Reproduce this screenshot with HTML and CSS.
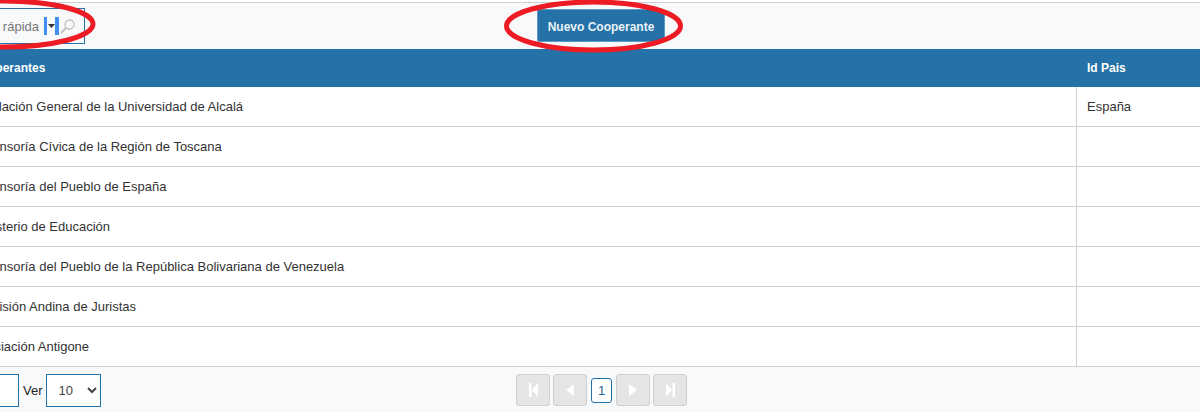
FILE: index.html
```html
<!DOCTYPE html>
<html lang="es">
<head>
<meta charset="utf-8">
<title>Cooperantes</title>
<link rel="stylesheet" href="styles.css">
</head>
<body>
<div class="page">
  <div class="toolbar">
    <div class="toolbar-left">
      <div class="search">
        <span class="search-label">Búsqueda rápida</span>
        <span class="search-menu"><svg width="7" height="4" viewBox="0 0 7 4"><path d="M0 0h7L3.500 4z" fill="#333"/></svg></span>
        <svg class="search-icon" width="15" height="15" viewBox="0 0 15 15"><circle cx="9.500" cy="5.500" r="4.500" fill="none" stroke="#c4c4c4" stroke-width="1.400"/><path d="M6.300 8.700 1 14" stroke="#c4c4c4" stroke-width="2" fill="none"/></svg>
      </div>
    </div>
    <button class="btn-new">Nuevo Cooperante</button>
  </div>
  <table class="grid">
    <thead>
      <tr><th>Cooperantes</th><th class="col-pais">Id Pais</th></tr>
    </thead>
    <tbody>
      <tr><td>Fundación General de la Universidad de Alcalá</td><td class="col-pais">España</td></tr>
      <tr><td>Defensoría Cívica de la Región de Toscana</td><td class="col-pais"></td></tr>
      <tr><td>Defensoría del Pueblo de España</td><td class="col-pais"></td></tr>
      <tr><td>Ministerio de Educación</td><td class="col-pais"></td></tr>
      <tr><td>Defensoría del Pueblo de la República Bolivariana de Venezuela</td><td class="col-pais"></td></tr>
      <tr><td>Comisión Andina de Juristas</td><td class="col-pais"></td></tr>
      <tr><td>Asociación Antigone</td><td class="col-pais"></td></tr>
    </tbody>
  </table>
  <div class="pager">
    <div class="pager-left">
      <span class="page-input"></span>
      <span class="ver">Ver</span>
      <select class="size"><option>10</option></select>
    </div>
    <div class="pager-nav">
      <span class="nav"><svg width="9" height="14" viewBox="0 0 9 14"><path d="M0 0h2.500v14H0zM9 0v14L3 7z" fill="#fff"/></svg></span>
      <span class="nav"><svg width="8" height="12" viewBox="0 0 8 12"><path d="M8 0v12L0 6z" fill="#fff"/></svg></span>
      <span class="current">1</span>
      <span class="nav"><svg width="8" height="12" viewBox="0 0 8 12"><path d="M0 0v12l8-6z" fill="#fff"/></svg></span>
      <span class="nav"><svg width="9" height="14" viewBox="0 0 9 14"><path d="M0 0v14l6-7zM6.500 0H9v14H6.500z" fill="#fff"/></svg></span>
    </div>
  </div>
  <svg class="marks" width="1200" height="412" viewBox="0 0 1200 412">
    <ellipse cx="4" cy="24" rx="89" ry="23" fill="none" stroke="#ed1c24" stroke-width="5"/>
    <ellipse cx="593.500" cy="26" rx="87" ry="24" fill="none" stroke="#ed1c24" stroke-width="5"/>
  </svg>
</div>
</body>
</html>
```
FILE: styles.css
```css
* { box-sizing: border-box; }
html, body { margin: 0; padding: 0; }
body {
  width: 1200px;
  height: 412px;
  overflow: hidden;
  background: #fff;
  font-family: "Liberation Sans", Arial, sans-serif;
  font-size: 13px;
  color: #333;
}
.page { position: relative; width: 1200px; height: 412px; overflow: hidden; background: #fff; padding-top: 2px; }
.toolbar {
  height: 47px;
  background: #f8f9fb;
  border-top: 1px solid #cfcfcf;
  display: grid;
  grid-template-columns: 1fr auto 1fr;
  align-items: center;
}
.toolbar-left { display: flex; justify-content: flex-end; width: 85px; }
.search {
  display: flex;
  align-items: center;
  flex: none;
  height: 36px;
  width: 170px;
  border: 1px solid #2472a8;
  justify-content: flex-end;
  padding-right: 9px;
}
.search > * { flex: none; }
.search-label { color: #777; font-size: 13px; margin-right: 5px; white-space: nowrap; }
.search-menu {
  width: 15px;
  height: 18px;
  border-left: 3px solid #3f8ef0;
  border-right: 4px solid #3f8ef0;
  display: flex;
  align-items: center;
  justify-content: center;
}
.search-icon { margin-left: 1px; }
.btn-new {
  width: 128px;
  height: 33px;
  margin: 0 0 1px 2px;
  background: #2472a8;
  color: #e8f1f7;
  border: 1px solid #5b9bc7;
  border-radius: 2px;
  font-family: "Liberation Sans", Arial, sans-serif;
  font-size: 12px;
  font-weight: bold;
  padding: 2px 0 0;
}
.grid {
  width: 1200px;
  border-collapse: separate;
  border-spacing: 0;
  table-layout: fixed;
  background: #fff;
}
.grid th {
  height: 38px;
  background: #2472a8;
  color: #fff;
  font-size: 12px;
  font-weight: bold;
  text-align: left;
  padding: 0 0 0 11px;
}
.grid td {
  height: 40px;
  padding: 0 0 0 10px;
  border-bottom: 1px solid #cfcfcf;
  font-size: 13px;
  color: #333;
}
.grid th:first-child { padding-left: 0; text-indent: -28px; white-space: nowrap; }
.grid td:first-child { padding-left: 0; text-indent: -28px; white-space: nowrap; }
.col-pais { width: 124px; }
td.col-pais { border-left: 1px solid #cfcfcf; }
.pager {
  position: relative;
  height: 45px;
  background: #f8f9fb;
  display: flex;
  justify-content: center;
  align-items: flex-start;
  padding-top: 7px;
}
.pager-left {
  position: absolute;
  left: -20px;
  top: 7px;
  display: flex;
  align-items: center;
}
.page-input { width: 39px; height: 33px; background: #fff; border: 1px solid #2472a8; }
.ver { margin: 0 3px 0 4px; font-size: 13px; color: #222; }
.size {
  width: 55px;
  height: 33px;
  background: #fff;
  border: 1px solid #2472a8;
  border-radius: 0;
  color: #444;
  font-family: "Liberation Sans", Arial, sans-serif;
  font-size: 13px;
  padding-left: 8px;
}
.pager-nav { display: flex; align-items: center; gap: 3px; margin-left: 3px; }
.nav {
  width: 34px;
  height: 32px;
  background: #e5e5e5;
  border: 1px solid #cfcfcf;
  border-radius: 3px;
  display: flex;
  align-items: center;
  justify-content: center;
}
.current {
  width: 21px;
  height: 25px;
  margin: 0 1px;
  background: #fff;
  border: 1px solid #2472a8;
  border-radius: 3px;
  display: flex;
  align-items: center;
  justify-content: center;
  color: #2a5f8a;
  font-size: 13px;
}
.marks { position: absolute; left: 0; top: 0; pointer-events: none; }
```
